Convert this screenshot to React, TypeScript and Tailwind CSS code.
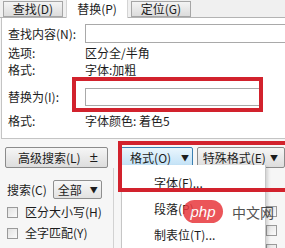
import React from "react";

const Tab: React.FC<{ label: string; active?: boolean }> = ({ label, active }) =>
  active ? (
    <div className="w-[62px] h-[18px] -mb-px bg-white border-x border-[#d4d4d4] flex items-center justify-center">
      {label}
    </div>
  ) : (
    <div className="w-[60px] h-[16px] border border-[#a6a6a6] bg-gradient-to-b from-[#f4f4f4] to-[#dcdcdc] flex items-center justify-center">
      {label}
    </div>
  );

const Check: React.FC<{ label?: string }> = ({ label }) => (
  <div className="flex items-center h-[20px] gap-[7px]">
    <div className="w-[11px] h-[11px] border border-[#9a9a9a] bg-gradient-to-br from-[#e2e2e2] to-[#fbfbfb]" />
    {label && <span>{label}</span>}
  </div>
);

export default function App() {
  return (
    <div className="relative w-[285px] h-[248px] overflow-hidden bg-[#f6f6f6] text-[12px] leading-none text-[#1c1c1c] font-['Noto_Sans_CJK_SC',sans-serif]">
      {/* tabs */}
      <div className="h-[18px] flex items-end gap-[3px] pl-[3px] bg-[#f0f0f0] border-b border-[#b3b3b3]">
        <Tab label="查找(D)" />
        <Tab label="替换(P)" active />
        <Tab label="定位(G)" />
      </div>

      {/* tab panel */}
      <div className="ml-px bg-white border-l border-b border-[#c4c4c4] pt-[6px] pb-[9px]">
        <div className="flex items-center h-[19px]">
          <span className="w-[83px] pl-[6px]">查找内容(N):</span>
          <div className="flex-1 h-[19px] border-y border-l border-[#a9a9a9] bg-white" />
        </div>
        <div className="flex items-center h-[17px] mt-px">
          <span className="w-[83px] pl-[6px]">选项:</span>
          <span>区分全/半角</span>
        </div>
        <div className="flex items-center h-[17px]">
          <span className="w-[83px] pl-[6px]">格式:</span>
          <span>字体:加粗</span>
        </div>
        <div className="flex items-center h-[18px] mt-[10px]">
          <span className="w-[83px] pl-[6px]">替换为(I):</span>
          <div className="w-[176px] h-[18px] border border-[#a9a9a9] bg-white" />
        </div>
        <div className="flex items-center h-[16px] mt-[7px]">
          <span className="w-[83px] pl-[6px]">格式:</span>
          <span>字体颜色: 着色5</span>
        </div>
      </div>

      {/* buttons */}
      <div className="flex items-center mt-[8px] pl-[5px] h-[21px]">
        <div className="w-[105px] h-[21px] rounded-[2px] border border-[#8b8b8b] bg-gradient-to-b from-[#f6f6f6] to-[#dddddd] flex items-center pl-[12px] gap-[8px]">
          <span>高级搜索(L)</span>
          <span className="text-[10px] font-bold">±</span>
        </div>
        <div className="ml-[12px] w-[74px] h-[21px] rounded-[2px] border border-[#3c7fb1] bg-gradient-to-b from-[#eaf6fd] to-[#bfe0f6] flex items-center pl-[9px] gap-[10px]">
          <span>格式(O)</span>
          <span className="text-[8px]">▼</span>
        </div>
        <div className="ml-[4px] w-[90px] h-[21px] rounded-[2px] border border-[#8b8b8b] bg-gradient-to-b from-[#f6f6f6] to-[#dddddd] flex items-center pl-[5px] gap-[4px]">
          <span>特殊格式(E)</span>
          <span className="text-[8px]">▼</span>
        </div>
      </div>

      {/* search options */}
      <div className="flex h-[90px]">
        <div className="w-[114px] border-r border-[#d2d2d2] pl-[7px] pt-[12px]">
          <div className="flex items-center h-[19px] gap-[6px]">
            <span>搜索(C)</span>
            <div className="w-[49px] h-[19px] rounded-[2px] border border-[#8f8f8f] bg-gradient-to-b from-[#f8f8f8] to-[#e2e2e2] flex items-center pl-[4px] gap-[8px]">
              <span>全部</span>
              <span className="text-[8px]">▼</span>
            </div>
          </div>
          <div className="mt-[3px] flex flex-col gap-[1px]">
            <Check label="区分大小写(H)" />
            <Check label="全字匹配(Y)" />
            <Check label="使用通配符(U)" />
          </div>
        </div>
        <div className="flex-1 pl-[152px] pt-[34px] flex flex-col gap-[1px]">
          <Check />
          <Check />
          <Check />
        </div>
      </div>

      {/* dropdown menu */}
      <div className="absolute left-[121px] top-[165px] w-[145px] h-[100px] bg-white border-x border-[#c6c6c6] shadow-[2px_2px_3px_rgba(0,0,0,0.15)] pt-[5px] pl-[32px]">
        <div className="h-[26px] flex items-center">字体(F)...</div>
        <div className="h-[26px] flex items-center">段落(P)...</div>
        <div className="h-[26px] flex items-center">制表位(T)...</div>
      </div>

      {/* watermark */}
      <div className="absolute left-[183px] top-[200px] flex items-center gap-[9px] opacity-85">
        <div className="w-[40px] h-[23px] rounded-full bg-[#e8383d] flex items-center justify-center text-white text-[15px] italic font-['Liberation_Sans',sans-serif]">
          php
        </div>
        <span className="text-[14px] text-[#333]">中文网</span>
      </div>

      {/* red annotation boxes */}
      <div className="absolute left-[72px] top-[77px] w-[191px] h-[35px] border-4 border-[#d2222d]" />
      <div className="absolute left-[118px] top-[141px] w-[180px] h-[51px] border-4 border-[#d2222d]" />
    </div>
  );
}
